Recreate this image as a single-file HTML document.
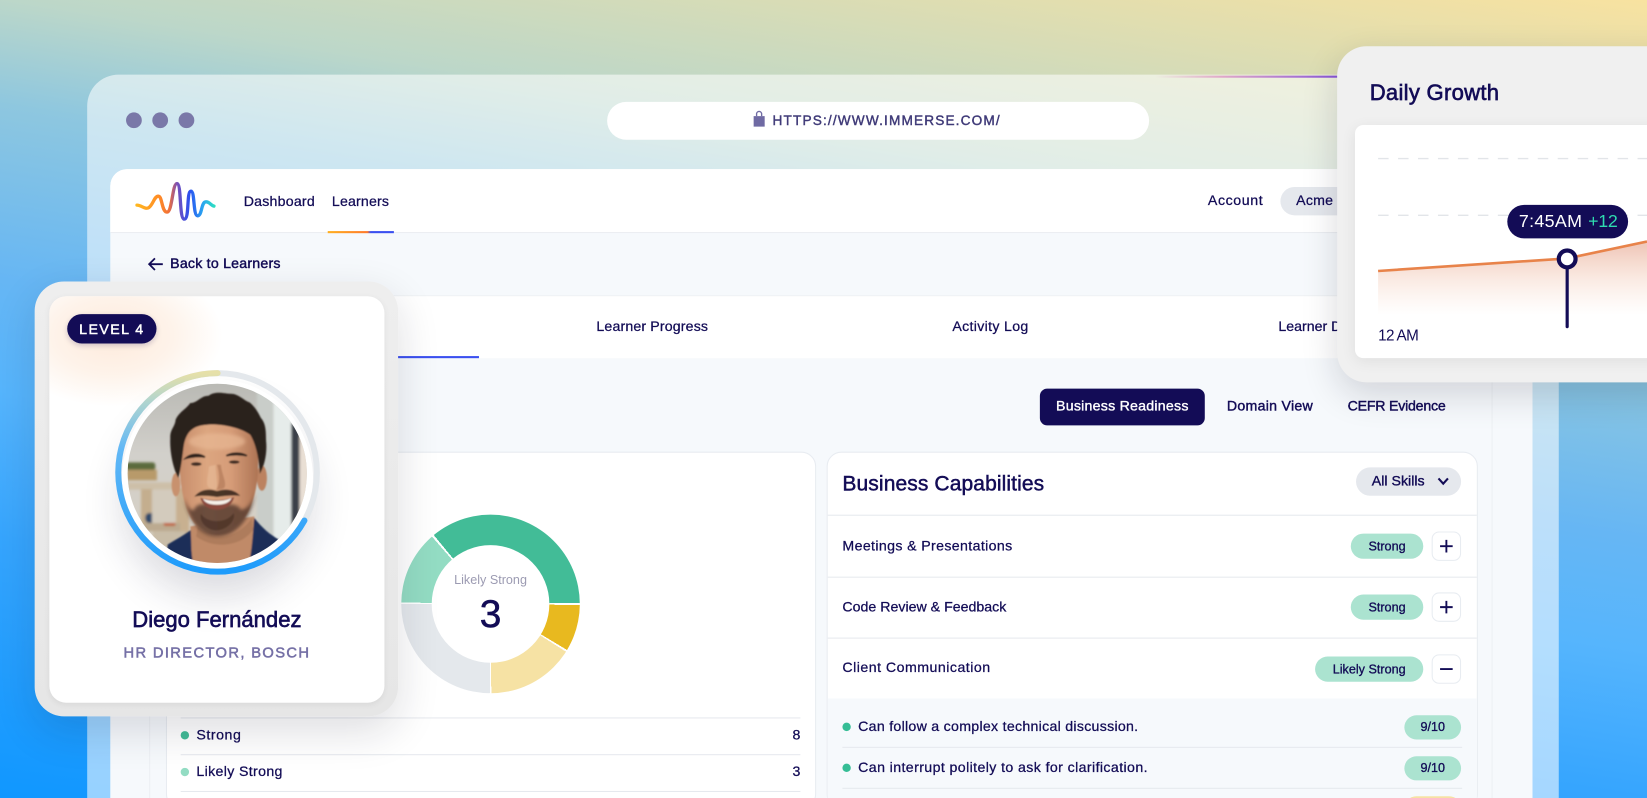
<!DOCTYPE html>
<html><head><meta charset="utf-8"><title>Immerse</title>
<style>
html,body{margin:0;padding:0;width:1647px;height:798px;overflow:hidden;background:#36a5fe}
#s{position:absolute;left:0;top:0;width:1568px;height:759.7px;transform:scale(1.05038);transform-origin:0 0;overflow:hidden;
font-family:"Liberation Sans",sans-serif;color:#130c56;
background:linear-gradient(189deg,#f8e2a0 0,#bcd7c9 24.5%,#8ec7df 34.5%,#66b6f4 51%,#56b5fd 61.5%,#36a5fe 75.4%,#1097ff 100%)}
#s div{position:absolute;box-sizing:border-box}
.t{white-space:nowrap;line-height:20px;height:20px;font-size:13.5px;-webkit-text-stroke:.25px currentColor}
.b{border-radius:12px;background:#abe3d0;font-size:12px;text-align:center;white-space:nowrap;-webkit-text-stroke:.3px currentColor}
.ln{height:1px;background:#e6e9ee}
.btn{left:1363px;width:28px;height:28px;background:#fff;border:1px solid #e8ecf1;border-radius:7px}
.dot{width:8px;height:8px;border-radius:50%}
</style></head><body><div id="s">

<!-- browser window -->
<div style="left:83px;top:71px;width:1401px;height:689px;border-radius:30px 30px 0 0;background:rgba(255,255,255,.56)"></div>
<div style="left:1100px;top:71.5px;width:180px;height:2px;background:linear-gradient(90deg,rgba(139,92,246,0),#e0a8c8 35%,#8350d8 100%)"></div>
<div style="left:120px;top:107.3px;width:15px;height:15px;border-radius:50%;background:#7a78a8"></div>
<div style="left:145px;top:107.3px;width:15px;height:15px;border-radius:50%;background:#7a78a8"></div>
<div style="left:170px;top:107.3px;width:15px;height:15px;border-radius:50%;background:#7a78a8"></div>
<div style="left:578px;top:97px;width:516px;height:36px;border-radius:18px;background:#fff"></div>
<svg style="position:absolute;left:716px;top:105px" width="14" height="17" viewBox="0 0 14 17"><path d="M1.500 5.500h10.500v10h-10.500z" fill="#6f6aa3"/><path d="M4.300 5.500V3.500a2.400 2.400 0 0 1 4.800 0v2" fill="none" stroke="#6f6aa3" stroke-width="1.300"/></svg>
<div class="t" style="left:735.5px;top:105px;font-size:13px;letter-spacing:1.08px;color:#3f3a78;-webkit-text-stroke:.4px #3f3a78">HTTPS://WWW.IMMERSE.COM/</div>

<!-- app -->
<div style="left:105px;top:161px;width:1354px;height:599px;border-radius:16px 16px 0 0;background:#f6f9fc"></div>
<div style="left:105px;top:161px;width:1354px;height:61px;border-radius:16px 16px 0 0;background:#fff;border-bottom:1px solid #e6e9ee"></div>
<svg style="position:absolute;left:119px;top:161.8px" width="104.7" height="57.1" viewBox="0 0 330 180"><defs><linearGradient id="lg" gradientUnits="userSpaceOnUse" x1="33" y1="0" x2="270" y2="0"><stop offset="0" stop-color="#ffb81f"/><stop offset=".3" stop-color="#ff8a26"/><stop offset=".42" stop-color="#f0703a"/><stop offset=".52" stop-color="#7a50b8"/><stop offset=".68" stop-color="#2a50f0"/><stop offset=".85" stop-color="#2aa8f0"/><stop offset="1" stop-color="#2ce0c0"/></linearGradient></defs><path d="M36 105C50 105 60 120 72 112C85 102 88 78 100 78C112 78 110 126 126 126C142 126 142 40 156 40C170 40 162 147 178 147C194 147 184 63 198 63C210 63 204 137 218 137C232 137 228 95 243 95C254 95 258 106 267 108" fill="none" stroke="url(#lg)" stroke-width="10" stroke-linecap="round"/></svg>
<div class="t" style="left:232px;top:182px;letter-spacing:.2px">Dashboard</div>
<div class="t" style="left:316px;top:182px;letter-spacing:.15px">Learners</div>
<div style="left:312px;top:219.5px;width:63px;height:2px;background:linear-gradient(90deg,#ffb020,#ff7a2a 60%,#3b50f0 65%)"></div>
<div class="t" style="left:1150px;top:181px;letter-spacing:.55px">Account</div>
<div style="left:1219px;top:178px;width:120px;height:27px;border-radius:14px;background:#e5e8ed"></div>
<div class="t" style="left:1234px;top:181px;letter-spacing:.2px">Acme</div>

<svg style="position:absolute;left:140px;top:244px" width="16" height="15" viewBox="0 0 16 15"><path d="M15 7.500H2M7.500 2L2 7.500L7.500 13" fill="none" stroke="#130c56" stroke-width="1.700"/></svg>
<div class="t" style="left:162px;top:241px;letter-spacing:.2px;-webkit-text-stroke:.4px #130c56">Back to Learners</div>

<div style="left:142px;top:340px;width:1279px;height:420px;border-left:1px solid #edf0f4;border-right:1px solid #edf0f4"></div>
<div style="left:142px;top:281px;width:1279px;height:60px;background:#fff;border-top:1px solid #eef1f4"></div>
<div style="left:142px;top:339px;width:314px;height:2px;background:#3b50f0"></div>
<div class="t" style="left:461px;width:320px;text-align:center;top:301px;letter-spacing:.13px">Learner Progress</div>
<div class="t" style="left:783px;width:320px;text-align:center;top:301px;letter-spacing:.3px">Activity Log</div>
<div class="t" style="left:1217px;top:301px">Learner Details</div>

<div style="left:990px;top:370px;width:157px;height:35px;border-radius:7px;background:#130c56"></div>
<div class="t" style="left:990px;width:157px;text-align:center;top:377px;color:#fff;letter-spacing:.22px;-webkit-text-stroke:.35px #fff">Business Readiness</div>
<div class="t" style="left:1168px;top:377px;letter-spacing:.25px;-webkit-text-stroke:.4px #130c56">Domain View</div>
<div class="t" style="left:1283px;top:377px;letter-spacing:-.22px;-webkit-text-stroke:.4px #130c56">CEFR Evidence</div>

<!-- left panel -->
<div style="left:158px;top:430px;width:619px;height:340px;border-radius:14px;background:#fff;border:1px solid #e8ecf1"></div>
<div style="left:382px;top:490px;width:170px;height:170px;border-radius:50%;background:conic-gradient(#42bc97 0 89.3deg,#fff 89.3deg 90.7deg,#e8b91f 90.7deg 121deg,#fff 121deg 122.3deg,#f6e2a4 122.3deg 179.5deg,#fff 179.5deg 180.5deg,#e4e8ec 180.5deg 270deg,#fff 270deg 271deg,#93dcc3 271deg 319deg,#fff 319deg 320.5deg,#42bc97 320.5deg 360deg)"></div>
<div style="left:411px;top:519px;width:112px;height:112px;border-radius:50%;background:#fff"></div>
<div class="t" style="left:411px;width:112px;text-align:center;top:542px;font-size:12px;color:#9c9bb2;-webkit-text-stroke:0">Likely Strong</div>
<div class="t" style="left:411px;width:112px;text-align:center;top:565px;height:40px;line-height:40px;font-size:37px;-webkit-text-stroke:.5px #130c56">3</div>
<div class="ln" style="left:172px;top:683px;width:590px"></div>
<div class="dot" style="left:172px;top:696px;background:#42bc97"></div>
<div class="t" style="left:187px;top:690px;letter-spacing:.5px">Strong</div>
<div class="t" style="left:742px;width:20px;text-align:right;top:690px">8</div>
<div class="ln" style="left:172px;top:718px;width:590px"></div>
<div class="dot" style="left:172px;top:731px;background:#93dcc3"></div>
<div class="t" style="left:187px;top:725px;letter-spacing:.32px">Likely Strong</div>
<div class="t" style="left:742px;width:20px;text-align:right;top:725px">3</div>
<div class="ln" style="left:172px;top:753px;width:590px"></div>

<!-- right panel -->
<div style="left:787px;top:430px;width:620px;height:340px;border-radius:14px;background:#fff;border:1px solid #e8ecf1"></div>
<div style="left:788px;top:665px;width:618px;height:105px;background:#f6f9fc"></div>
<div class="t" style="left:802px;top:451px;font-size:20px;letter-spacing:.1px;-webkit-text-stroke:.45px #130c56">Business Capabilities</div>
<div style="left:1291px;top:445px;width:100px;height:27px;border-radius:14px;background:#e5e8ed"></div>
<div class="t" style="left:1306px;top:448px;-webkit-text-stroke:.35px #130c56">All Skills</div>
<svg style="position:absolute;left:1368px;top:454px" width="12" height="9" viewBox="0 0 12 9"><path d="M1.500 1.500L6 6.500L10.500 1.500" fill="none" stroke="#130c56" stroke-width="2"/></svg>
<div class="ln" style="left:788px;top:490px;width:618px"></div>
<div class="ln" style="left:788px;top:549px;width:618px"></div>
<div class="ln" style="left:788px;top:607px;width:618px"></div>

<div class="t" style="left:802px;top:509.5px;letter-spacing:.34px">Meetings &amp; Presentations</div>
<div class="b" style="left:1286px;top:508px;width:69px;height:24px;line-height:24px">Strong</div>
<div class="btn" style="top:505.5px"></div>
<svg style="position:absolute;left:1369px;top:511.5px" width="16" height="16" viewBox="0 0 16 16"><path d="M8 2V14M2 8H14" stroke="#130c56" stroke-width="1.800"/></svg>

<div class="t" style="left:802px;top:568px">Code Review &amp; Feedback</div>
<div class="b" style="left:1286px;top:566px;width:69px;height:24px;line-height:24px">Strong</div>
<div class="btn" style="top:564px"></div>
<svg style="position:absolute;left:1369px;top:570px" width="16" height="16" viewBox="0 0 16 16"><path d="M8 2V14M2 8H14" stroke="#130c56" stroke-width="1.800"/></svg>

<div class="t" style="left:802px;top:626px;letter-spacing:.45px">Client Communication</div>
<div class="b" style="left:1252px;top:625px;width:103px;height:24px;line-height:24px">Likely Strong</div>
<div class="btn" style="top:622.5px"></div>
<svg style="position:absolute;left:1369px;top:628.5px" width="16" height="16" viewBox="0 0 16 16"><path d="M2 8H14" stroke="#130c56" stroke-width="1.800"/></svg>

<div class="dot" style="left:802px;top:688px;background:#35bd95"></div>
<div class="t" style="left:817px;top:682px;letter-spacing:.26px">Can follow a complex technical discussion.</div>
<div class="b" style="left:1337px;top:681px;width:54px;height:23px;line-height:23px">9/10</div>
<div class="ln" style="left:802px;top:711px;width:590px"></div>
<div class="dot" style="left:802px;top:727px;background:#35bd95"></div>
<div class="t" style="left:817px;top:721px;letter-spacing:.37px">Can interrupt politely to ask for clarification.</div>
<div class="b" style="left:1337px;top:720px;width:54px;height:23px;line-height:23px">9/10</div>
<div class="ln" style="left:802px;top:750px;width:590px"></div>
<div class="b" style="left:1337px;top:758px;width:54px;height:23px;background:#f6e2a4"></div>

<!-- profile card -->
<div style="left:33px;top:268px;width:346px;height:414px;border-radius:28px;background:linear-gradient(180deg,#eeeeee,#e6e6e6);box-shadow:0 14px 40px rgba(20,20,40,.14)"></div>
<div style="left:47px;top:281.5px;width:319px;height:387.5px;border-radius:16px;overflow:hidden;background:#fff;box-shadow:0 2px 6px rgba(0,0,0,.06)">
  <div style="left:-45px;top:-30px;width:210px;height:135px;background:radial-gradient(closest-side,#fdeadb 0,#fef3ea 55%,rgba(255,255,255,0) 100%)"></div>
</div>
<div style="left:64px;top:299px;width:85px;height:28px;border-radius:14px;background:#130c56;box-shadow:0 2px 5px rgba(19,12,86,.2)"></div>
<div class="t" style="left:64px;width:85px;text-align:center;top:303.5px;color:#fff;font-size:13.5px;letter-spacing:1.35px;-webkit-text-stroke:.45px #fff">LEVEL 4</div>

<div style="left:116px;top:364px;width:182px;height:182px;border-radius:50%;box-shadow:0 22px 38px rgba(30,30,60,.16)"></div>
<svg style="position:absolute;left:104.7px;top:352.2px" width="209.4" height="209.4" viewBox="0 0 660 660">
<defs>
<clipPath id="pc"><circle cx="321" cy="311" r="269"/></clipPath>
<linearGradient id="rg" gradientUnits="userSpaceOnUse" x1="0" y1="10" x2="0" y2="606"><stop offset="0" stop-color="#e6e0a8"/><stop offset=".15" stop-color="#aed4d0"/><stop offset=".38" stop-color="#62b8f6"/><stop offset="1" stop-color="#1e9bfb"/></linearGradient>
<linearGradient id="wall" x1="0" y1="0" x2="0" y2="1"><stop offset="0" stop-color="#b8b8b3"/><stop offset=".4" stop-color="#d2d0cb"/><stop offset="1" stop-color="#d8d0c2"/></linearGradient>
<linearGradient id="skin" x1="0" y1="0" x2="1" y2="0"><stop offset="0" stop-color="#c68c6a"/><stop offset=".35" stop-color="#dca680"/><stop offset=".65" stop-color="#d69c78"/><stop offset="1" stop-color="#ad7454"/></linearGradient>
<filter id="bl" x="-5%" y="-5%" width="110%" height="110%"><feGaussianBlur stdDeviation="4"/></filter>
<filter id="b2" x="-10%" y="-10%" width="120%" height="120%"><feGaussianBlur stdDeviation="2.200"/></filter>
<filter id="b3" x="-20%" y="-20%" width="140%" height="140%"><feGaussianBlur stdDeviation="5"/></filter>
</defs>
<circle cx="322" cy="308" r="298" fill="none" stroke="#e4e8ec" stroke-width="18"/>
<path d="M322 10A298 298 0 1 0 582.600 452.500" fill="none" stroke="url(#rg)" stroke-width="18" stroke-linecap="round"/>
<circle cx="321" cy="311" r="282" fill="#fff"/>
<g clip-path="url(#pc)">
<rect x="40" y="30" width="560" height="560" fill="url(#wall)"/>
<g filter="url(#bl)">
<rect x="440" y="30" width="60" height="500" fill="#c9cdc9"/>
<rect x="490" y="90" width="55" height="430" fill="#e6ecea"/>
<rect x="543" y="160" width="26" height="320" fill="#3a4048"/>
<rect x="568" y="200" width="30" height="300" fill="#e9dfd4"/>
<rect x="45" y="278" width="90" height="24" rx="8" fill="#5b6b3e"/>
<rect x="50" y="300" width="90" height="32" fill="#b89a6a"/>
<rect x="45" y="338" width="160" height="22" fill="#cdbfa8"/>
<rect x="92" y="358" width="35" height="120" fill="#c4ae8e"/>
<rect x="195" y="355" width="42" height="170" fill="#c8b090"/>
<rect x="45" y="460" width="165" height="25" fill="#bcaa90"/>
<rect x="105" y="430" width="60" height="30" rx="12" fill="#2f4a6a"/>
<rect x="160" y="448" width="36" height="20" rx="5" fill="#c0562c"/>
<rect x="125" y="360" width="72" height="100" fill="#d3cbbd"/>
<rect x="127" y="485" width="100" height="60" fill="#c9bda8"/>
</g>
<g filter="url(#b2)">
<path d="M168 590L172 525C195 510 225 495 245 478L430 442C455 475 480 495 506 510L520 590Z" fill="#1f2f58"/>
<path d="M240 470C245 510 240 545 250 585H415C425 545 428 490 432 440Z" fill="#c08a68"/>
<path d="M262 470C300 520 380 510 425 445L428 480C395 530 310 540 258 500Z" fill="#9a6a4e" opacity=".45"/>
<ellipse cx="197" cy="345" rx="13" ry="35" fill="#c8916e"/>
<ellipse cx="455" cy="325" rx="15" ry="38" fill="#bc8260"/>
<path d="M208 240C205 120 445 100 442 240C448 300 442 395 398 452C365 492 300 505 260 470C220 432 204 330 208 240Z" fill="url(#skin)"/>
<ellipse cx="320" cy="215" rx="85" ry="24" fill="#e8b894" opacity=".7" filter="url(#b3)"/>
<path d="M222 385C232 440 262 498 318 500C374 502 422 450 436 368C426 402 408 420 392 420C382 398 345 404 320 404C295 404 260 394 250 422C238 422 230 405 222 385Z" fill="#4e352a" opacity=".78" filter="url(#b3)"/>
<path d="M272 432C290 462 350 462 370 430C378 452 350 482 318 482C290 482 265 455 272 432Z" fill="#3e2a20" opacity=".55"/>
<path d="M252 381C270 358 298 356 320 364C345 356 372 358 390 378C368 376 345 378 320 382C298 378 272 376 252 381Z" fill="#3e2a20" opacity=".92"/>
<path d="M270 384C300 394 342 394 372 382C364 410 342 420 320 420C298 420 278 410 270 384Z" fill="#8a4a3c"/>
<path d="M278 387C302 396 340 396 364 385C358 400 340 405 320 405C300 405 284 400 278 387Z" fill="#f6f1ea"/>
<path d="M226 266C240 252 268 250 284 262C265 259 244 261 226 266ZM348 258C366 248 392 248 410 258C392 254 366 254 348 258Z" fill="#2e211b" stroke="#2e211b" stroke-width="5"/>
<ellipse cx="258" cy="283" rx="16" ry="5.500" fill="#3e2a20"/>
<ellipse cx="372" cy="277" rx="16" ry="5" fill="#3e2a20"/>
<path d="M332 285C334 312 350 338 343 353C335 361 325 358 318 360C330 345 328 310 320 285Z" fill="#a86f50" opacity=".55"/>
<path d="M296 290C294 320 285 342 296 354C304 358 312 360 318 360C324 345 316 310 316 285Z" fill="#eabf9c" opacity=".55"/>
<path d="M204 325C188 295 178 245 180 205C178 180 195 170 196 150C208 125 228 118 240 100C262 100 270 78 295 78C315 62 345 72 362 72C385 72 400 92 418 98C435 112 445 130 452 145C470 165 466 195 468 220C470 250 464 285 449 312C446 275 440 228 420 195C385 170 320 160 282 166C245 170 226 190 220 232C216 262 212 300 204 325Z" fill="#2a211d"/>
</g>
</g>
</svg>

<div class="t" style="left:47px;width:319px;text-align:center;top:579px;height:24px;line-height:24px;font-size:21px;-webkit-text-stroke:.6px #130c56">Diego Fernández</div>
<div class="t" style="left:47px;width:319px;text-align:center;top:611px;font-size:14px;letter-spacing:1.3px;color:#7570a6;-webkit-text-stroke:.5px #7570a6">HR DIRECTOR, BOSCH</div>

<!-- daily growth -->
<div style="left:1273px;top:44px;width:340px;height:320px;border-radius:28px;background:#f0f0f0;box-shadow:0 12px 34px rgba(20,20,40,.16)"></div>
<div style="left:1290px;top:119px;width:320px;height:222px;border-radius:8px;background:#fff;box-shadow:0 3px 14px rgba(0,0,0,.07)"></div>
<div class="t" style="left:1304px;top:76px;height:26px;line-height:26px;font-size:21px;letter-spacing:.27px;-webkit-text-stroke:.6px #130c56">Daily Growth</div>
<svg style="position:absolute;left:1290px;top:119px" width="278" height="222" viewBox="1290 119 278 222">
<defs><linearGradient id="ar" gradientUnits="userSpaceOnUse" x1="0" y1="235" x2="0" y2="300"><stop offset="0" stop-color="#dc8060" stop-opacity=".42"/><stop offset=".5" stop-color="#e89c78" stop-opacity=".2"/><stop offset="1" stop-color="#f0b090" stop-opacity="0"/></linearGradient></defs>
<path d="M1312 151H1568M1312 205H1568" stroke="#e2e5e9" stroke-width="1.300" stroke-dasharray="10 9"/>
<path d="M1312 258L1492 246L1568 230V300H1312Z" fill="url(#ar)"/>
<path d="M1312 258L1492 246L1568 230" fill="none" stroke="#e8834a" stroke-width="2.500"/>
<path d="M1492 252V311" stroke="#130c56" stroke-width="3" stroke-linecap="round"/>
<circle cx="1492" cy="246.500" r="8" fill="#fff" stroke="#130c56" stroke-width="4"/>
</svg>
<div style="left:1435px;top:195px;width:115px;height:32px;border-radius:16px;background:#130c56"></div>
<div class="t" style="left:1446px;top:201px;font-size:17px;letter-spacing:.3px;color:#fff;-webkit-text-stroke:0">7:45AM</div>
<div class="t" style="left:1512px;top:201px;font-size:17px;letter-spacing:-.3px;color:#2fdcb0;-webkit-text-stroke:0">+12</div>
<div class="t" style="left:1312px;top:310px;font-size:14.5px;letter-spacing:-.6px;-webkit-text-stroke:0">12 AM</div>

</div></body></html>
